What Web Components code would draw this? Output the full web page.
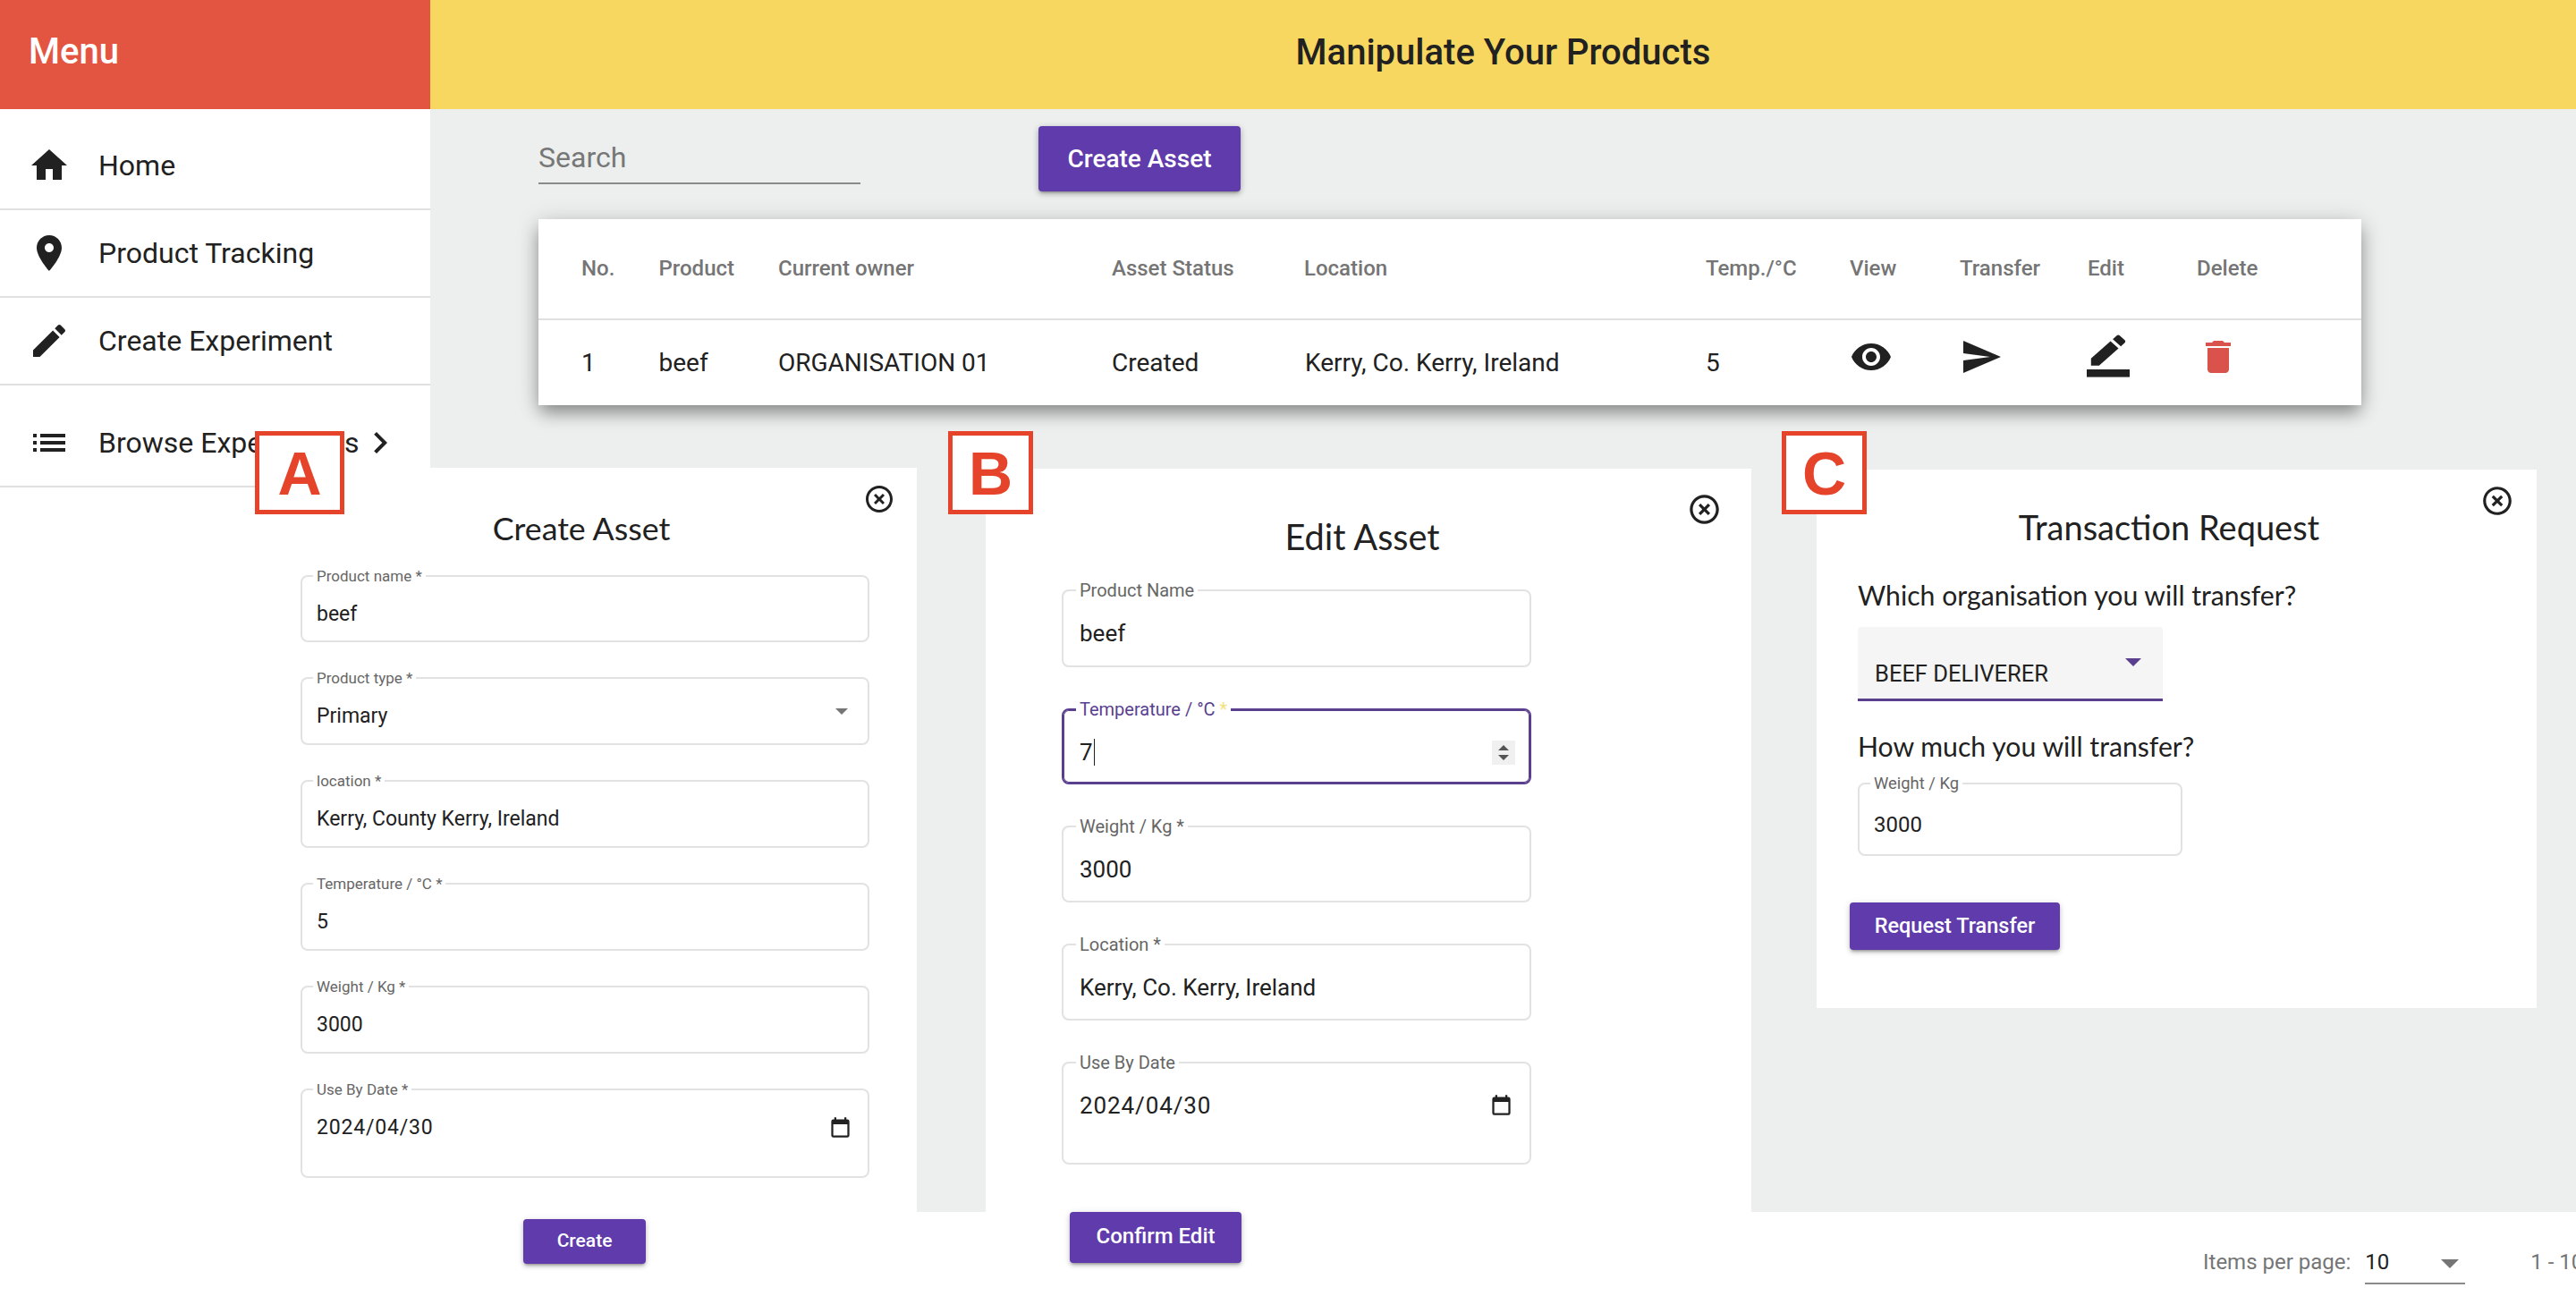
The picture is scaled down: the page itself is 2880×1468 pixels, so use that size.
<!DOCTYPE html>
<html lang="en">
<head>
<meta charset="utf-8">
<title>Manipulate Your Products</title>
<style>
html,body{margin:0;padding:0;background:#fff;overflow:hidden;width:2880px;height:1468px}
body{font-family:Roboto,"Liberation Sans",sans-serif;color:#212121}
</style>
</head>
<body>
<x-app>
  <x-sidebar slot="side" heading="Menu">
    <x-nav-item icon="home" style="padding-top:15px">Home</x-nav-item>
    <x-nav-item icon="place">Product Tracking</x-nav-item>
    <x-nav-item icon="edit">Create Experiment</x-nav-item>
    <x-nav-item icon="list" chevron style="padding-top:16px">Browse Experiments</x-nav-item>
  </x-sidebar>
  <x-topbar slot="top">Manipulate Your Products</x-topbar>
  <x-toolbar slot="content"></x-toolbar>
  <x-asset-table slot="content">
    <x-row head>
      <span>No.</span><span>Product</span><span>Current owner</span><span>Asset Status</span><span>Location</span><span>Temp./°C</span><span>View</span><span>Transfer</span><span>Edit</span><span>Delete</span>
    </x-row>
    <x-row>
      <span>1</span><span>beef</span><span>ORGANISATION 01</span><span>Created</span><span style="margin-left:1px">Kerry, Co. Kerry, Ireland</span><span>5</span>
      <x-icon name="eye" size="48" class="up"></x-icon>
      <x-icon name="send" size="48" class="up"></x-icon>
      <x-icon name="border" size="48" class="up" style="transform:translate(-1px,-3px) scale(1.2,1.07)"></x-icon>
      <x-icon name="delete" size="48" color="#d9534c" class="up"></x-icon>
    </x-row>
  </x-asset-table>
  <x-pagination slot="foot"></x-pagination>
</x-app>

<x-panel style="left:300px;top:523px;width:725px;height:945px;--pl:36px;--pt:46px;--title:35.7px;--title-w:700px;--title-h:44px;--title-mb:30px;--close-top:17px;--close-right:24px;--close:36px">
  <span slot="title">Create Asset</span>
  <x-stack style="width:636px;--gap:39px;--fs:23px;--lfs:17px;--vt:28px;--lh:28px">
    <x-field label="Product name" required style="height:75px">beef</x-field>
    <x-field label="Product type" required style="height:76px">Primary<x-caret slot="end" color="#757575" w="14" h="7" style="margin:0 22px 12px 0"></x-caret></x-field>
    <x-field label="location" required style="height:76px">Kerry, County Kerry, Ireland</x-field>
    <x-field label="Temperature / °C" required style="height:76px">5</x-field>
    <x-field label="Weight / Kg" required style="height:76px">3000</x-field>
    <x-field label="Use By Date" required style="height:100px"><span style="letter-spacing:.8px">2024/04/30</span><x-icon slot="end" name="calendar" size="27" style="margin-right:17px"></x-icon></x-field>
  </x-stack>
  <x-btn style="width:137px;height:50px;font-size:21px;margin:46px 0 0 249px">Create</x-btn>
</x-panel>

<x-panel style="left:1102px;top:524px;width:856px;height:944px;--pl:85px;--pt:52px;--title:39.7px;--title-w:842px;--title-h:48px;--title-mb:35px;--close-top:26px;--close-right:33px;--close:39px">
  <span slot="title">Edit Asset</span>
  <x-stack style="width:525px;--gap:46px;--fs:26px;--lfs:20px;--vt:32px;--lh:30px;--vl:18px;--ll:14px">
    <x-field label="Product Name" style="height:87px">beef</x-field>
    <x-field label="Temperature / °C" required focused style="height:85px">7<x-spin slot="end"></x-spin></x-field>
    <x-field label="Weight / Kg" required style="height:86px">3000</x-field>
    <x-field label="Location" required style="height:86px">Kerry, Co. Kerry, Ireland</x-field>
    <x-field label="Use By Date" style="height:115px"><span style="letter-spacing:.9px">2024/04/30</span><x-icon slot="end" name="calendar" size="27" style="margin:0 18px 0 0"></x-icon></x-field>
  </x-stack>
  <x-btn style="width:192px;height:57px;font-size:24px;margin:53px 0 0 9px">Confirm Edit</x-btn>
</x-panel>

<x-panel style="left:2031px;top:525px;width:805px;height:602px;--pl:46px;--pt:42px;--title:38px;--title-w:788px;--title-h:44px;--title-mb:34px;--close-top:16px;--close-right:25px;--close:38px">
  <span slot="title">Transaction Request</span>
  <x-question>Which organisation you will transfer?</x-question>
  <x-select style="margin-top:16px">BEEF DELIVERER</x-select>
  <x-question style="margin-top:30px">How much you will transfer?</x-question>
  <x-stack style="margin-top:21px;width:363px;--gap:0px;--fs:24px;--lfs:18.4px;--vt:30px;--lh:30px">
    <x-field label="Weight / Kg" style="height:82px">3000</x-field>
  </x-stack>
  <x-btn style="width:235px;height:53px;font-size:23.5px;margin:52px 0 0 -9px;padding-bottom:1px">Request Transfer</x-btn>
</x-panel>

<x-tag style="left:285px;width:100px">A</x-tag>
<x-tag style="left:1060px">B</x-tag>
<x-tag style="left:1992px">C</x-tag>

<script>
const PATHS = {
  home:'M10 20v-6h4v6h5v-8h3L12 3 2 12h3v8z',
  place:'M12 2C8.13 2 5 5.13 5 9c0 5.25 7 13 7 13s7-7.75 7-13c0-3.87-3.13-7-7-7zm0 9.5c-1.38 0-2.5-1.12-2.5-2.5s1.12-2.5 2.5-2.5 2.5 1.12 2.5 2.5-1.12 2.5-2.5 2.5z',
  edit:'M3 17.25V21h3.75L17.81 9.94l-3.75-3.75L3 17.25zM20.71 7.04c.39-.39.39-1.02 0-1.41l-2.34-2.34c-.39-.39-1.02-.39-1.41 0l-1.83 1.83 3.75 3.75 1.83-1.83z',
  list:'M3 13h2v-2H3v2zm0 4h2v-2H3v2zm0-8h2V7H3v2zm4 4h14v-2H7v2zm0 4h14v-2H7v2zM7 7v2h14V7H7z',
  chevron:'M10 6L8.59 7.41 13.17 12l-4.58 4.59L10 18l6-6z',
  eye:'M12 4.5C7 4.5 2.73 7.61 1 12c1.73 4.39 6 7.5 11 7.5s9.27-3.11 11-7.5c-1.73-4.39-6-7.5-11-7.5zM12 17c-2.76 0-5-2.24-5-5s2.24-5 5-5 5 2.24 5 5-2.24 5-5 5zm0-8c-1.66 0-3 1.34-3 3s1.34 3 3 3 3-1.34 3-3-1.34-3-3-3z',
  send:'M2.01 21L23 12 2.01 3 2 10l15 2-15 2z',
  border:'M22 24H2v-4h20v4zM13.06 5.19l3.75 3.75L7.75 18H4v-3.75l9.06-9.06zm4.82 2.68l-3.75-3.75 1.83-1.83c.39-.39 1.02-.39 1.41 0l2.34 2.34c.39.39.39 1.02 0 1.41l-1.83 1.83z',
  delete:'M6 19c0 1.1.9 2 2 2h8c1.1 0 2-.9 2-2V7H6v12zM19 4h-3.5l-1-1h-5l-1 1H5v2h14V4z',
  close:'M14.59 8L12 10.59 9.41 8 8 9.41 10.59 12 8 14.59 9.41 16 12 13.41 14.59 16 16 14.59 13.41 12 16 9.41 14.59 8zM12 2C6.47 2 2 6.47 2 12s4.47 10 10 10 10-4.47 10-10S17.53 2 12 2zm0 18c-4.41 0-8-3.59-8-8s3.59-8 8-8 8 3.59 8 8-3.59 8-8 8z',
  calendar:'M6 1v2H5a2 2 0 0 0-2 2v14a2 2 0 0 0 2 2h14a2 2 0 0 0 2-2V5a2 2 0 0 0-2-2h-1V1h-2v2H8V1zM5 8h14v11H5z'
};
const icon = (n,s,c='currentColor') => `<svg width="${s}" height="${s}" viewBox="0 0 24 24" style="display:block"><path fill="${c}" fill-rule="evenodd" d="${PATHS[n]}"/></svg>`;
function def(name, html, setup){
  customElements.define(name, class extends HTMLElement{
    constructor(){
      super();
      const r=this.attachShadow({mode:'open'});
      r.innerHTML = typeof html==='function' ? html(this) : html;
      if(setup) setup(this,r);
    }
  });
}

customElements.define('x-icon', class extends HTMLElement{
  connectedCallback(){
    if(this.shadowRoot) return;
    const r=this.attachShadow({mode:'open'});
    const s=this.getAttribute('size')||48;
    r.innerHTML=`<style>:host{display:block;width:${s}px;height:${s}px;flex:none}:host(.up){margin-top:-13px}</style>`+icon(this.getAttribute('name'),s,this.getAttribute('color')||'#212121');
  }
});

customElements.define('x-caret', class extends HTMLElement{
  connectedCallback(){
    if(this.shadowRoot) return;
    const r=this.attachShadow({mode:'open'});
    const w=+this.getAttribute('w'),h=+this.getAttribute('h'),c=this.getAttribute('color');
    r.innerHTML=`<style>:host{display:block;flex:none;width:${w}px;height:${h}px}</style><svg width="${w}" height="${h}" viewBox="0 0 ${w} ${h}" style="display:block"><path fill="${c}" d="M0 0H${w}L${w/2} ${h}z"/></svg>`;
  }
});

def('x-app',`<style>
:host{display:grid;grid-template-columns:481px 1fr;width:2880px;height:1468px;overflow:hidden}
.main{display:flex;flex-direction:column;min-width:0}
.content{height:1233px;background:#ecefee;padding:19px 0 0 121px;box-sizing:border-box;flex:none}
</style>
<slot name="side"></slot>
<div class="main"><slot name="top"></slot><div class="content"><slot name="content"></slot></div><slot name="foot"></slot></div>`);

def('x-sidebar',h=>`<style>
:host{display:block;background:#fff}
.h{height:122px;box-sizing:border-box;background:#e35541;color:#fff;font:500 40px/116px Roboto,sans-serif;padding-left:32px}
</style><div class="h">${h.getAttribute('heading')}</div><slot></slot>`);

def('x-nav-item',h=>`<style>
:host{display:block;border-bottom:2px solid #e0e0e0;font:400 32px Roboto,sans-serif;color:#212121}
.r{display:flex;align-items:center;height:96px;padding-left:31px}
.t{margin-left:31px;white-space:nowrap}
.c{position:absolute;left:401px}
</style><div class="r">${icon(h.getAttribute('icon'),48,'#212121')}<span class="t"><slot></slot></span>${h.hasAttribute('chevron')?`<span class="c">${icon('chevron',48,'#212121')}</span>`:''}</div>`);

def('x-topbar',`<style>
:host{display:flex;align-items:center;justify-content:center;height:122px;box-sizing:border-box;padding-bottom:6px;flex:none;background:#f7d75f;color:#212121;font:500 40px Roboto,sans-serif}
</style><slot></slot>`);

def('x-toolbar',`<style>
:host{display:flex;align-items:flex-start;gap:199px;height:74px;margin-bottom:30px}
.s{width:360px;height:63px;border-bottom:2px solid #8a8a8a;font:400 32px/70px Roboto,sans-serif;color:#777}
button{all:unset;box-sizing:border-box;width:226px;height:73px;background:#5f3bab;color:#fff;border-radius:4px;font:500 28px Roboto,sans-serif;text-align:center;box-shadow:0 3px 3px -2px rgba(0,0,0,.3),0 3px 6px rgba(0,0,0,.2),0 1px 8px rgba(0,0,0,.12)}
</style><div class="s">Search</div><button>Create Asset</button>`);

def('x-asset-table',`<style>
:host{display:block;width:2038px;background:#fff;box-shadow:0 10px 18px -2px rgba(0,0,0,.38),0 2px 26px rgba(0,0,0,.14)}
</style><slot></slot>`);

def('x-row',h=>`<style>
:host{display:grid;grid-template-columns:86.5px 133.5px 373px 215px 449px 161px 123px 143px 122px 184px;padding-left:48px;align-items:center;white-space:nowrap}
:host([head]){height:113px;border-bottom:2px solid #e0e0e0;box-sizing:border-box;font:500 24px Roboto,sans-serif;color:#757575;padding-bottom:2px}
:host(:not([head])){height:95px;font:400 28px Roboto,sans-serif;color:#212121;padding-bottom:1px;box-sizing:border-box}
</style><slot></slot>`);

def('x-pagination',`<style>
:host{display:flex;align-items:flex-start;height:113px;padding:42px 0 0 1982px;box-sizing:border-box;font:400 24px Roboto,sans-serif;color:#757575;white-space:nowrap;overflow:hidden;background:#fff}
.sel{display:flex;align-items:flex-start;width:112px;height:37px;margin:0 73px 0 16px;border-bottom:2px solid #8a8a8a;color:#212121;position:relative;flex:none}
.a{position:absolute;left:85px;top:11px;width:0;height:0;border:10px solid transparent;border-top-color:#757575;border-bottom:0}
</style><span>Items per page:</span><div class="sel">10<span class="a"></span></div><span>1 - 10</span>`);

def('x-panel',`<style>
:host{position:absolute;display:block;background:#fff;box-sizing:border-box;padding:var(--pt) 0 0 var(--pl)}
h2{margin:0 0 var(--title-mb) calc(0px - var(--pl));width:var(--title-w);height:var(--title-h);font:400 var(--title)/var(--title-h) Lato,sans-serif;color:#212121;text-align:center}
.x{position:absolute;top:var(--close-top);right:var(--close-right)}
.x svg{width:var(--close);height:var(--close)}
</style><h2><slot name="title"></slot></h2><div class="x">${icon('close',36,'#212121')}</div><slot></slot>`);

def('x-stack',`<style>:host{display:flex;flex-direction:column;gap:var(--gap)}</style><slot></slot>`);

def('x-field',h=>`<style>
:host{display:block;position:relative;box-sizing:border-box;border:2px solid #e2e2e2;border-radius:8px;font:400 var(--fs)/var(--lh) Roboto,sans-serif;color:#212121}
:host([focused]){border-color:#5b3f8f;box-shadow:inset 0 0 0 1px #5b3f8f}
.l{position:absolute;left:var(--ll,12px);top:calc(var(--lfs) * -.65);padding:0 4px;background:#fff;font:400 var(--lfs)/1.2 Roboto,sans-serif;color:#666;white-space:nowrap}
:host([focused]) .l{color:#5b3f8f}
:host([focused]) .st{color:#f2e27a}
.v{display:flex;align-items:center;justify-content:space-between;padding:var(--vt) 0 0 var(--vl,16px);white-space:nowrap}
.m{display:flex;align-items:center}
.cur{width:1px;height:30px;background:#212121;margin-left:1px}
</style><span class="l">${h.getAttribute('label')}${h.hasAttribute('required')?' <span class="st">*</span>':''}</span>
<div class="v"><span class="m"><slot></slot>${h.hasAttribute('focused')?'<span class="cur"></span>':''}</span><slot name="end"></slot></div>`);

def('x-spin',`<style>:host{display:block;flex:none;width:26px;height:27px;background:#f0f0f0;margin-right:16px}</style>
<svg width="26" height="27" viewBox="0 0 26 27" style="display:block"><path fill="#555" d="M13 5l6 6H7zM7 16h12l-6 6z"/></svg>`);

def('x-btn',`<style>
:host{display:flex;align-items:center;justify-content:center;box-sizing:border-box;background:#5f3bab;color:#fff;border-radius:4px;font-family:Roboto,sans-serif;font-weight:500;white-space:nowrap;padding-bottom:3px;box-shadow:0 3px 3px -2px rgba(0,0,0,.3),0 3px 5px rgba(0,0,0,.18),0 1px 8px rgba(0,0,0,.1)}
</style><slot></slot>`);

def('x-question',`<style>:host{display:block;font:400 30.2px/40px Lato,sans-serif;color:#212121}</style><slot></slot>`);

def('x-select',`<style>
:host{display:block;position:relative;box-sizing:border-box;width:341px;height:83px;background:#f5f5f5;border-bottom:3px solid #5b3f8f;border-radius:4px 4px 0 0;padding:38px 0 0 19px;font:400 25.5px/28px Roboto,sans-serif;color:#212121;white-space:nowrap}
.a{position:absolute;left:299px;top:35px;width:0;height:0;border:9px solid transparent;border-top:9px solid #5b3f8f;border-bottom:0}
</style><slot></slot><span class="a"></span>`);

def('x-tag',`<style>
:host{position:absolute;top:482px;display:flex;align-items:center;justify-content:center;box-sizing:border-box;width:95px;height:93px;background:#fff;border:5px solid #e5432a;color:#e5432a;font:700 68px/1 "Liberation Sans",Arial,sans-serif}
</style><slot></slot>`);
</script>
</body>
</html>
